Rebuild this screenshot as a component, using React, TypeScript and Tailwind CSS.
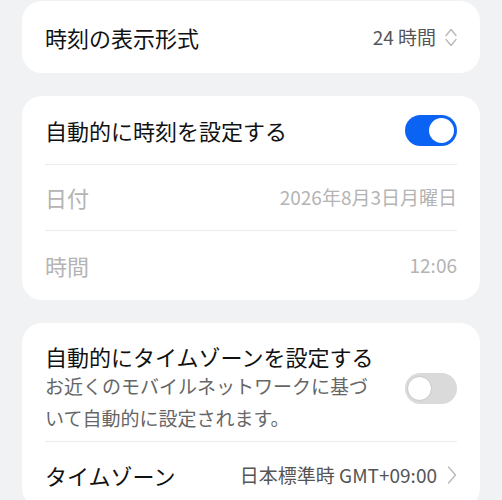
import React from 'react';

const font = { fontFamily: '"Noto Sans CJK JP", "Noto Sans", sans-serif' };

function Toggle({ on }: { on: boolean }) {
  return (
    <div
      className={
        on
          ? 'relative w-[52px] h-[31px] rounded-full bg-[#0a63f2] shrink-0'
          : 'relative w-[52px] h-[31px] rounded-full bg-[#dadada] shrink-0'
      }
    >
      <div
        className={
          on
            ? 'absolute top-[3px] right-[3px] w-[25px] h-[25px] rounded-full bg-white'
            : 'absolute top-[3px] left-[2px] w-[25px] h-[25px] rounded-full bg-white border border-[#c8c8c8]'
        }
      />
    </div>
  );
}

function UpDown() {
  return (
    <svg width="12" height="19" viewBox="0 0 12 19" fill="none" stroke="#b9b9b9" strokeWidth="1.4" strokeLinecap="round" strokeLinejoin="round" className="ml-[9px]">
      <path d="M1 7.5 L6 1.5 L11 7.5" />
      <path d="M1 11.5 L6 17.5 L11 11.5" />
    </svg>
  );
}

function ChevronRight() {
  return (
    <svg width="10" height="18" viewBox="0 0 10 18" fill="none" stroke="#b9b9b9" strokeWidth="1.4" strokeLinecap="round" strokeLinejoin="round" className="ml-[10px]">
      <path d="M1.5 1 L8.5 9 L1.5 17" />
    </svg>
  );
}

export default function App() {
  return (
    <div className="w-[502px] h-[500px] overflow-hidden bg-[#f1f2f4] px-[22px] pt-px" style={font}>
      {/* display format */}
      <div className="bg-white rounded-[20px] px-[23px] h-[72px] flex items-center justify-between">
        <span className="text-[22px] text-[#111]">時刻の表示形式</span>
        <div className="flex items-center">
          <span className="text-[19px] text-[#555]">24 時間</span>
          <UpDown />
        </div>
      </div>

      {/* auto time */}
      <div className="mt-[23px] bg-white rounded-[20px] px-[23px]">
        <div className="h-[69px] flex items-center justify-between border-b border-[#ececec]">
          <span className="text-[22px] text-[#111]">自動的に時刻を設定する</span>
          <Toggle on />
        </div>
        <div className="h-[66px] flex items-center justify-between border-b border-[#ececec]">
          <span className="text-[22px] text-[#b4b4b4]">日付</span>
          <span className="text-[19px] text-[#b4b4b4]">2026年8月3日月曜日</span>
        </div>
        <div className="h-[69px] flex items-center justify-between">
          <span className="text-[22px] text-[#b4b4b4]">時間</span>
          <span className="text-[19px] text-[#b4b4b4]">12:06</span>
        </div>
      </div>

      {/* time zone */}
      <div className="mt-[23px] bg-white rounded-[20px] px-[23px]">
        <div className="pt-[19px] pb-[7px] flex items-center gap-[30px] border-b border-[#ececec]">
          <div className="flex-1 min-w-0">
            <div className="text-[22px] leading-[28px] text-[#111] whitespace-nowrap">自動的にタイムゾーンを設定する</div>
            <div className="text-[19px] leading-[32px] text-[#666]">
              お近くのモバイルネットワークに基づいて自動的に設定されます。
            </div>
          </div>
          <Toggle on={false} />
        </div>
        <div className="h-[66px] flex items-center justify-between">
          <span className="text-[22px] text-[#111]">タイムゾーン</span>
          <div className="flex items-center">
            <span className="text-[19px] text-[#555]">日本標準時 GMT+09:00</span>
            <ChevronRight />
          </div>
        </div>
      </div>
    </div>
  );
}
